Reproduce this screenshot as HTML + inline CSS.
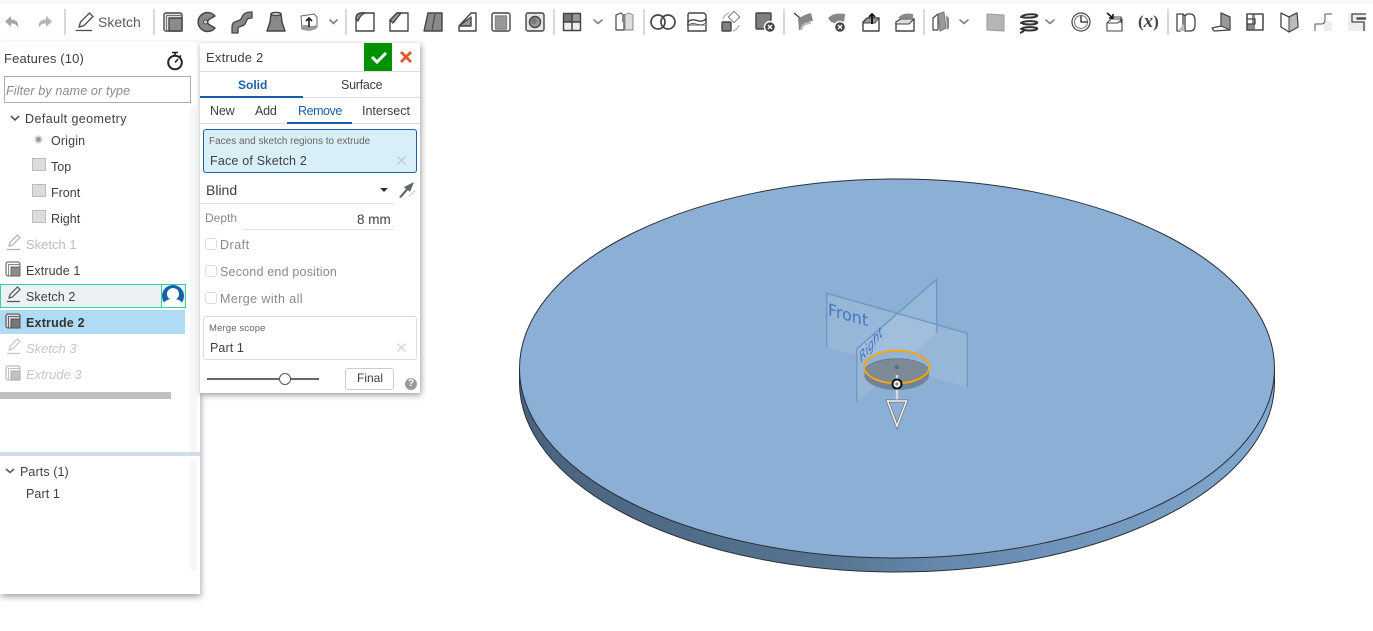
<!DOCTYPE html>
<html><head><meta charset="utf-8"><style>
html,body{margin:0;padding:0;width:1373px;height:631px;overflow:hidden;background:#fff;font-family:"Liberation Sans",sans-serif;color:#444}
.a{position:absolute}
.t{position:absolute;font-size:12.5px;line-height:16px;white-space:nowrap;color:#3f3f3f;margin-top:1px}
.g{color:#b9b9b9}
.d{color:#8a8a8a}
.cb{position:absolute;left:205px;width:10px;height:10px;border:1px solid #dcdcdc;border-radius:3px}
</style></head><body>
<div class="a" style="left:0;top:0;width:1373px;height:4px;background:#f8f8f8"></div>

<!-- 3D viewport -->
<svg class="a" style="left:0;top:0" width="1373" height="631" viewBox="0 0 1373 631">
<defs><linearGradient id="side" x1="0" x2="1" y1="0" y2="0"><stop offset="0" stop-color="#4a6380"/><stop offset=".4" stop-color="#55748f"/><stop offset=".55" stop-color="#6487ab"/><stop offset="1" stop-color="#82a9d2"/></linearGradient></defs>
<path d="M519.5 368.5V382.5A377.5 189.5 0 0 0 1274.5 382.5V368.5Z" fill="url(#side)" stroke="#2a2f36" stroke-width="1"/>
<ellipse cx="897" cy="368.5" rx="377.5" ry="189.5" fill="#8cafd5" stroke="#2a2f36" stroke-width="1"/>
<!-- planes -->
<polygon points="826.7,293.3 967.3,333.3 967.3,387.3 826.7,347.3" fill="#fff" fill-opacity=".1"/>
<polygon points="856.7,349 936.7,279.3 936.7,332.7 856.7,402.3" fill="#fff" fill-opacity=".1"/>
<path d="M826.7 347.3V293.3L967.3 333.3V387.3" fill="none" stroke="#6f9ac8" stroke-width="1.5"/>
<path d="M856.7 402.3V349L936.7 279.3V332.7" fill="none" stroke="#6f9ac8" stroke-width="1.5"/>
<text transform="matrix(.96 .27 0 1 828 315)" font-family="DejaVu Sans,sans-serif" font-size="16.5" fill="#4475bd">Front</text>
<text transform="matrix(.62 -.79 .25 .97 861 363)" font-family="DejaVu Sans,sans-serif" font-size="13.5" font-style="italic" fill="#4475bd">Right</text>
<!-- disc -->
<ellipse cx="896.7" cy="375" rx="32.3" ry="15" fill="#6f8499"/>
<ellipse cx="896.7" cy="367" rx="32.5" ry="16.3" fill="#94b3d4"/>
<path d="M864.5 371A32.3 13 0 0 1 929 371A32.3 13 0 0 1 864.5 371Z" fill="#7c8996" stroke="#5f6a76" stroke-width=".6"/>
<ellipse cx="896.7" cy="367" rx="32.5" ry="16.3" fill="none" stroke="#f5a70f" stroke-width="2"/>
<circle cx="896.7" cy="367" r="2" fill="#5e6873"/>
<path d="M897 375V400" stroke="#d7dade" stroke-width="2.4"/>
<circle cx="897" cy="384" r="4.5" fill="#fff" stroke="#111" stroke-width="2"/>
<circle cx="897" cy="384" r="1.6" fill="#8a8a8a"/>
<polygon points="887.5,401 906.5,401 897,426" fill="#8cafd5" fill-opacity=".35" stroke="#6d7277" stroke-width="3"/>
<polygon points="887.5,401 906.5,401 897,426" fill="none" stroke="#f4f4f4" stroke-width="1.5"/>
</svg>

<!-- Toolbar -->
<svg class="a" style="left:0;top:4px" width="1373" height="36" viewBox="0 4 1373 36">
<g fill="#d9d9d9"><rect x="64" y="9" width="2" height="26"/><rect x="153" y="9" width="2" height="26"/><rect x="345" y="9" width="2" height="26"/><rect x="553" y="9" width="2" height="26"/><rect x="643" y="9" width="2" height="26"/><rect x="783" y="9" width="2" height="26"/><rect x="923" y="9" width="2" height="26"/><rect x="1167" y="9" width="2" height="26"/></g>
<g fill="none" stroke="#999" stroke-width="1.6" stroke-linecap="round" stroke-linejoin="round">
<path d="M334 20l3.500 3.500 3.500-3.500M598 20l4 3.500 4-3.500M964 20l4 3.500 4-3.500M1050 20l4 3.500 4-3.500" stroke="#808080" transform="translate(-4 0)"/>
</g>
<!-- undo/redo -->
<path d="M5 21.500l6-5.500v3.500c5 0 8 2.500 7 8-1.500-3-3.500-4-7-4v3.500z" fill="#a6a6a6"/>
<path d="M52 21.500l-6-5.500v3.500c-5 0-8 2.500-7 8 1.500-3 3.500-4 7-4v3.500z" fill="#b5b5b5"/>
<!-- pencil -->
<g fill="none" stroke="#4a4a4a" stroke-width="1.3"><path d="M79 27l1.500-5 9-9 3.500 3.500-9 9z"/><path d="M75.500 30.500H92"/></g>
<text x="98" y="27" font-family="Liberation Sans,sans-serif" font-size="14" fill="#5a5a5a">Sketch</text>
<g stroke="#444" stroke-width="1.4" stroke-linejoin="round">
<!-- extrude -->
<g transform="translate(173 22)"><rect x="-9" y="-9" width="18" height="18" rx="2" fill="#fff"/><path d="M-6.500 9V-6.500H9" fill="none" stroke="#777"/><rect x="-4" y="-4" width="13" height="13" fill="#8c8c8c"/></g>
<!-- revolve -->
<g transform="translate(207 22)"><path d="M8-6A9.500 9.500 0 1 0 8 6L2 2.500a3 3 0 0 1 0-5z" fill="#888"/><circle cx="-1.500" cy="0" r="2" fill="#ddd" stroke-width="1"/></g>
<!-- sweep -->
<path d="M232 33v-6c0-7 7-5 9-8 2-5 4-7 11-7v6c-4 0-5 1-6 4-2 6-8 3-8 7v4z" fill="#888" stroke-width="1.300"/>
<!-- loft -->
<path d="M271 14h10l1 8 3 9h-18l3-9z" fill="#888"/><ellipse cx="276" cy="14" rx="5" ry="1.500" fill="#fff"/>
<!-- thicken -->
<g transform="translate(309 22)"><path d="M-8-6l13-2 3 3v10l-6 3-9-1z" fill="#fff" stroke="#666" stroke-width="1"/><path d="M-7 4c4-3 8 2 14-1v4l-7 2-6-1z" fill="#999" stroke="none"/><path d="M0 5V-3M-3 -1l3-3 3 3" stroke="#222" fill="none" stroke-width="1.600"/></g>
<!-- fillet -->
<g transform="translate(365 22)"><path d="M-9 9V-3q0-6 6-6H9V9z" fill="#fff"/><path d="M-9 -3q0-6 6-6h3q-5 2-7 8z" fill="#999"/></g>
<!-- chamfer -->
<g transform="translate(399 22)"><path d="M-9 9V-2L-2-9H9V9z" fill="#fff"/><path d="M-9-2L-2-9H2L-6 1z" fill="#999"/></g>
<!-- draft -->
<path d="M424 31l4-18h14v18z" fill="#8a8a8a"/><path d="M432 31l3-18" fill="none" stroke="#555"/>
<!-- rib -->
<g transform="translate(468 22)"><path d="M-9 9V4L3-9H8V9z" fill="#fff"/><path d="M-9 4L3-5V4z" fill="#999"/></g>
<!-- shell -->
<g transform="translate(501 22)"><rect x="-9" y="-9" width="18" height="18" rx="2" fill="#fff"/><rect x="-5.500" y="-6" width="11" height="13" fill="#999" stroke="#888"/></g>
<!-- hole -->
<g transform="translate(535 22)"><rect x="-9" y="-9" width="18" height="18" rx="2" fill="#e6e6e6"/><circle r="5.500" fill="#999"/><circle cx="-1" cy="-1" r="3" fill="#777" stroke="none"/></g>
<!-- pattern -->
<g transform="translate(572 22)"><rect x="-8.500" y="-8.500" width="8.500" height="8.500" fill="#777"/><rect y="-8.500" width="8.500" height="8.500" fill="#999"/><rect x="-8.500" width="8.500" height="8.500" fill="#eee"/><rect width="8.500" height="8.500" fill="#eee"/></g>
<!-- mirror -->
<g transform="translate(625 22)" stroke-width="1.200"><path d="M-9 8V-7l5-2 3 3V8z" fill="#fff"/><path d="M0 8V-7l4-2 4 2V8H3z" fill="#ddd" stroke="#999"/><rect x="-3" y="-8" width="3" height="8" fill="#888" stroke="none"/></g>
<!-- boolean -->
<g fill="none" stroke-width="1.700"><circle cx="658" cy="22" r="7"/><circle cx="668" cy="22" r="7"/></g>
<!-- split -->
<g transform="translate(697 22)"><path d="M-9-7q0-2 2-2H7l2 2V9H-9z" fill="#fff"/><path d="M-9 0C-3-6 2 3 9-3V1C2 7-3-2-9 4z" fill="#fff"/><path d="M-9 4C-3-2 2 7 9 1V4H-9z" fill="#aaa" stroke="none"/></g>
<!-- transform -->
<g transform="translate(731 22)"><rect x="-9" y="0" width="9" height="9" rx="1" fill="#808080"/><rect x="-1" y="-9" width="8" height="8" fill="#fff" stroke="#777" stroke-width="1" transform="rotate(45 3 -5)"/><path d="M-8-3a9 9 0 0 1 6-6M8 3a9 9 0 0 1-6 6" fill="none" stroke="#bbb" stroke-width="1.500"/></g>
<!-- delete part -->
<g transform="translate(765 22)"><rect x="-9" y="-9" width="15" height="16" rx="1" fill="#7f7f7f"/><circle cx="5" cy="5" r="5.500" fill="#444" stroke="#fff"/><path d="M3 3l4 4M7 3l-4 4" stroke="#fff"/></g>
<!-- surface icons -->
<g transform="translate(803 22)" stroke="none"><path d="M-5-3Q2-8 8-9l2 8Q2-1-1 8L-4 8z" fill="#888"/><path d="M-2 8Q-1 1 8 1" fill="none" stroke="#bbb" stroke-width="2.200"/><path d="M-9-9l6 5" stroke="#444" stroke-width="1.300"/></g>
<g transform="translate(837 22)"><path d="M-9-4Q-3-10 8-8L7 1 0 2-6 0z" fill="#888" stroke="none"/><circle cx="3" cy="5" r="5.500" fill="#444" stroke="#fff"/><path d="M1 3l4 4M5 3l-4 4" stroke="#fff"/></g>
<g transform="translate(871 22)"><path d="M-8 0l4-4H8V9H-8z" fill="#fff"/><path d="M-8 1L-4-4H8L4 1z" fill="#999" stroke-width="1"/><path d="M1 2V-7M-2-5l3-3 3 3" stroke="#111" fill="none" stroke-width="1.800"/></g>
<g transform="translate(905 22)"><path d="M-9 0L-4-3H9V9H-9z" fill="#fff"/><path d="M-9 0L-4-3H9L4 2H-9z" fill="#ddd" stroke-width="1"/><path d="M-7-4Q-2-10 8-8V-3H-4z" fill="#888" stroke="none"/></g>
<!-- wrap -->
<g transform="translate(941 22)"><path d="M-8-4l5-4V8H-8z" fill="#fff" stroke-width="1.200"/><path d="M-3-8L3-10 5 6-1 9z" fill="#999" stroke="#777" stroke-width="1"/><path d="M5-7L8-4V6L6 8z" fill="#888" stroke="none"/></g>
<!-- plane -->
<path d="M987 14l17 1v16l-17-1z" fill="#b5b5b5" stroke="#999" stroke-width="1"/>
<!-- helix -->
<g fill="none" stroke-width="2" stroke="#333"><path d="M1021 17c4-4 18-3 16-1s-13 2-15 1zM1021 23c4-3 18-2 16 0s-13 2-15 0zM1021 29c4-3 18-2 16 0s-13 2-15 0z"/><path d="M1020 33l4-2"/></g>
<!-- clock -->
<g fill="none" stroke-width="1.200"><circle cx="1081" cy="22" r="9"/><circle cx="1081" cy="22" r="6.500" stroke="#888"/><path d="M1081 15.500V22H1088" stroke-width="1.500"/></g>
<!-- import -->
<g transform="translate(1115 22)" stroke-width="1.100"><path d="M-8 1H3L7-3V9H-8z" fill="#fff"/><path d="M-8 1l4-4H7" fill="none"/><path d="M-1-5l7 0V1" fill="none"/><path d="M-8-9l6 5M-2-8v4h-4" stroke="#111" fill="none" stroke-width="1.500"/></g>
</g>
<text x="1138" y="27" font-family="Liberation Serif,serif" font-size="17" font-weight="bold" fill="#444">(<tspan font-style="italic" font-size="19">x</tspan>)</text>
<g stroke="#444" stroke-width="1.300" stroke-linejoin="round">
<g transform="translate(1186 22)"><path d="M-9-8h6l2 2 2-2h3Q9-8 9-2V3Q9 9 4 9H-1l-2-2-3 2H-9z" fill="#fff"/><path d="M-3-8V6L-1 9M-1-6V9" fill="none"/><path d="M-3 2l2 7H-8z" fill="#bbb" stroke="none"/></g>
<g transform="translate(1221 22)"><path d="M-9 6l9-2V-9L9-5V8L-7 9z" fill="#fff"/><path d="M0 4V-9L9-5V8z" fill="#999" stroke-width="1"/></g>
<g transform="translate(1255 22)"><rect x="-8" y="-8" width="16" height="16" fill="#fff"/><rect x="-8" y="2" width="8" height="6" fill="#8a8a8a" stroke="none"/><rect x="-3" y="-8" width="3" height="16" fill="#8a8a8a" stroke="none"/><path d="M-8-3H0V2H-8" fill="none"/><rect x="-8" y="-8" width="16" height="16" fill="none"/></g>
<g transform="translate(1289 22)"><path d="M-8-9L0-5 8-9 9 5 0 10-8 5z" fill="#fff"/><path d="M0-5V10M8-9L9 5 0 10V-5z" fill="#bbb" stroke-width="1"/></g>
<g transform="translate(1323 22)" fill="none" stroke="#555" stroke-width="1"><rect x="1" y="-1" width="8" height="10" fill="#eee" stroke="none"/><path d="M-8 9V2H-2Q2 2 2-2V-8H9"/></g>
<g transform="translate(1357 22)"><rect x="-9" y="-9" width="18" height="18" fill="#eee" stroke="none"/><path d="M9-8H-5V0H7V9" fill="none" stroke="#444"/><path d="M9-4H0V-3H9" fill="none" stroke="#444"/></g>
</g>
</svg>

<!-- Feature panel -->
<div class="a" style="left:0;top:42px;width:200px;height:552px;background:#fff;box-shadow:1px 3px 6px rgba(0,0,0,.35)"></div>
<div class="a" style="left:190px;top:107px;width:7px;height:345px;background:#f6f7f9"></div>
<div class="a" style="left:190px;top:460px;width:7px;height:110px;background:#f6f7f9"></div>
<div class="t" style="left:4px;top:50px;font-size:13px;letter-spacing:.15px">Features (10)</div>
<svg class="a" style="left:165px;top:51px" width="20" height="20" fill="none" stroke="#222"><circle cx="10" cy="11.500" r="6.800" stroke-width="2"/><path d="M7 1.500h6M10 2v2.500M10 11.500l3-3.500M16 4.500l-1.500 1.500" stroke-width="1.600"/></svg>
<div class="a" style="left:4px;top:76px;width:185px;height:25px;border:1px solid #adadad"></div>
<div class="t d" style="left:6px;top:82px;font-style:italic;font-size:12.500px;letter-spacing:.15px">Filter by name or type</div>

<svg class="a" style="left:0;top:105px" width="200" height="300" viewBox="0 105 200 300">
<path d="M11 116l4 4 4-4" fill="none" stroke="#444" stroke-width="1.500"/>
<circle cx="38.500" cy="139.500" r="2.500" fill="#999"/><circle cx="38.500" cy="139.500" r="3.500" fill="none" stroke="#ccc"/>
<g fill="#dcdcdc" stroke="#bdbdbd"><rect x="32.500" y="158.500" width="13" height="12"/><rect x="32.500" y="184.500" width="13" height="12"/><rect x="32.500" y="210.500" width="13" height="12"/></g>
<g fill="none" stroke="#b0b0b0" stroke-width="1.200"><path d="M9 246l1-3.500 7.500-7.500 2.500 2.500-7.500 7.500zM7 249.500h13"/></g>
<g fill="none" stroke="#c6c6c6" stroke-width="1.200"><path d="M9 350l1-3.500 7.500-7.500 2.500 2.500-7.500 7.500zM7 353.500h13"/></g>
</svg>
<div class="t" style="left:25px;top:110px;letter-spacing:.42px">Default geometry</div>
<div class="t" style="left:51px;top:132px;letter-spacing:.15px">Origin</div>
<div class="t" style="left:51px;top:158px">Top</div>
<div class="t" style="left:51px;top:184px">Front</div>
<div class="t" style="left:51px;top:210px">Right</div>
<div class="t g" style="left:26px;top:236px;font-size:13px;color:#bdbdbd">Sketch 1</div>

<svg class="a" style="left:5px;top:261px" width="17" height="17"><rect x="1" y="1" width="14" height="14" rx="2" fill="#fff" stroke="#555"/><path d="M3.500 15V3.500H15" fill="none" stroke="#888"/><rect x="6" y="6" width="9" height="9" fill="#8c8c8c" stroke="#666"/></svg>
<div class="t" style="left:26px;top:262px;letter-spacing:.1px">Extrude 1</div>

<div class="a" style="left:0;top:284px;width:184px;height:22px;border:1px solid #2fd3a3;background:#ecf1f5"></div>
<div class="a" style="left:161px;top:285px;width:1px;height:22px;background:#2fd3a3"></div>
<svg class="a" style="left:162px;top:285px" width="22" height="22"><circle cx="11" cy="11" r="11" fill="#1b5ea9"/><circle cx="11" cy="9" r="6" fill="#fff"/><path d="M1 22c0-7 6-8 10-8s10 1 10 8z" fill="#fff"/></svg>
<svg class="a" style="left:0;top:285px" width="26" height="22"><g fill="none" stroke="#555" stroke-width="1.200"><path d="M9 13l1-3.500 7.500-7.500 2.500 2.500-7.500 7.500zM7 16.500h13"/></g></svg>
<div class="t" style="left:26px;top:288px;letter-spacing:.1px">Sketch 2</div>

<div class="a" style="left:0;top:310px;width:185px;height:24px;background:#b0dbf5"></div>
<svg class="a" style="left:5px;top:313px" width="17" height="17"><rect x="1" y="1" width="14" height="14" rx="2" fill="#ddd" stroke="#444"/><path d="M3.500 15V3.500H15" fill="none" stroke="#666"/><rect x="6" y="6" width="9" height="9" fill="#777" stroke="#555"/></svg>
<div class="t" style="left:26px;top:314px;font-weight:bold;color:#333;letter-spacing:.2px">Extrude 2</div>
<div class="t g" style="left:26px;top:340px;font-style:italic;font-size:13px;color:#c6c6c6">Sketch 3</div>
<svg class="a" style="left:5px;top:365px" width="17" height="17"><rect x="1" y="1" width="14" height="14" rx="2" fill="#fff" stroke="#aaa"/><path d="M3.500 15V3.500H15" fill="none" stroke="#c2c2c2"/><rect x="6" y="6" width="9" height="9" fill="#c2c2c2" stroke="#aaa"/></svg>
<div class="t g" style="left:26px;top:366px;font-style:italic;font-size:13px;color:#c6c6c6">Extrude 3</div>
<div class="a" style="left:0;top:392px;width:171px;height:7px;background:#c0c0c0"></div>

<div class="a" style="left:0;top:452px;width:200px;height:4px;background:#d0dde8"></div>
<svg class="a" style="left:0;top:462px" width="20" height="20"><path d="M6 7l4 3.500 4-3.500" fill="none" stroke="#555" stroke-width="1.500"/></svg>
<div class="t" style="left:20px;top:463px;letter-spacing:.1px">Parts (1)</div>
<div class="t" style="left:26px;top:485px;letter-spacing:.1px">Part 1</div>

<!-- Dialog -->
<div class="a" style="left:200px;top:43px;width:220px;height:350px;background:#fff;box-shadow:1px 2px 6px rgba(0,0,0,.4)"></div>
<div class="t" style="left:206px;top:49px;font-size:13px;letter-spacing:.2px">Extrude 2</div>
<div class="a" style="left:364px;top:43px;width:28px;height:28px;background:#009100"></div>
<svg class="a" style="left:364px;top:43px" width="56" height="28"><path d="M8 14l5 5 9-9" fill="none" stroke="#fff" stroke-width="3"/><path d="M37 9l10 10M47 9L37 19" stroke="#e4572e" stroke-width="2.800"/></svg>
<div class="a" style="left:200px;top:71px;width:220px;height:1px;background:#ddd"></div>
<div class="t" style="left:238px;top:76px;color:#1b5ea9;font-weight:bold;font-size:12px">Solid</div>
<div class="t" style="left:341px;top:76px;letter-spacing:-.25px">Surface</div>
<div class="a" style="left:200px;top:97px;width:220px;height:1px;background:#ddd"></div>
<div class="a" style="left:200px;top:96px;width:103px;height:2px;background:#1b5ea9"></div>
<div class="t" style="left:210px;top:102px;letter-spacing:-.2px">New</div>
<div class="t" style="left:255px;top:102px;letter-spacing:-.2px">Add</div>
<div class="t" style="left:298px;top:102px;color:#1b5ea9;letter-spacing:-.45px">Remove</div>
<div class="t" style="left:362px;top:102px">Intersect</div>
<div class="a" style="left:200px;top:123px;width:220px;height:1px;background:#ddd"></div>
<div class="a" style="left:287px;top:122px;width:65px;height:2px;background:#1b5ea9"></div>

<div class="a" style="left:203px;top:129px;width:212px;height:42px;background:#d9eff8;border:1px solid #1b5ea9;border-radius:3px"></div>
<div class="t" style="left:209px;top:133px;font-size:10px;color:#666">Faces and sketch regions to extrude</div>
<div class="t" style="left:210px;top:152px;letter-spacing:.2px">Face of Sketch 2</div>
<svg class="a" style="left:396px;top:155px" width="11" height="11"><path d="M1.500 1.500l8 8M9.500 1.500l-8 8" stroke="#b5c3cb" stroke-width="1"/></svg>
<div class="t" style="left:206px;top:181px;font-size:14px">Blind</div>
<svg class="a" style="left:378px;top:186px" width="12" height="8"><path d="M2 2h8l-4 4z" fill="#333"/></svg>
<svg class="a" style="left:397px;top:180px" width="20" height="20"><path d="M2 17l7-8-2-2 10-5-4 10-2-2-7 8z" fill="#5d6770"/><path d="M12 16l6-5" stroke="#b6bcc2" stroke-width="1.200" stroke-dasharray="2 1"/></svg>
<div class="a" style="left:200px;top:203px;width:194px;height:1px;background:#e2e2e2"></div>
<div class="t d" style="left:205px;top:209px;font-size:12px">Depth</div>
<div class="t" style="left:357px;top:211px;font-size:13.500px">8 mm</div>
<div class="a" style="left:242px;top:229px;width:152px;height:1px;background:#e2e2e2"></div>
<div class="cb" style="top:238px"></div><div class="t d" style="left:220px;top:236px;letter-spacing:.5px">Draft</div>
<div class="cb" style="top:265px"></div><div class="t d" style="left:220px;top:263px;letter-spacing:.2px">Second end position</div>
<div class="cb" style="top:292px"></div><div class="t d" style="left:220px;top:290px;letter-spacing:.42px">Merge with all</div>
<div class="a" style="left:203px;top:316px;width:212px;height:42px;border:1px solid #dcdcdc;border-radius:3px"></div>
<div class="t" style="left:209px;top:320px;font-size:9.500px;color:#666;letter-spacing:.15px">Merge scope</div>
<div class="t" style="left:210px;top:339px;letter-spacing:.1px">Part 1</div>
<svg class="a" style="left:396px;top:342px" width="11" height="11"><path d="M1.500 1.500l8 8M9.500 1.500l-8 8" stroke="#c5c9cc" stroke-width="1"/></svg>
<div class="a" style="left:207px;top:378px;width:112px;height:2px;background:#666"></div>
<div class="a" style="left:279px;top:373px;width:10px;height:10px;border:1px solid #555;border-radius:50%;background:#fff"></div>
<div class="a" style="left:345px;top:368px;width:47px;height:20px;border:1px solid #ccc;border-radius:3px"></div>
<div class="t" style="left:357px;top:369px;font-size:12px">Final</div>
<div class="a" style="left:405px;top:378px;width:12px;height:12px;border-radius:50%;background:#9a9a9a;color:#fff;font:bold 10px/12px 'Liberation Sans',sans-serif;text-align:center">?</div>
</body></html>
